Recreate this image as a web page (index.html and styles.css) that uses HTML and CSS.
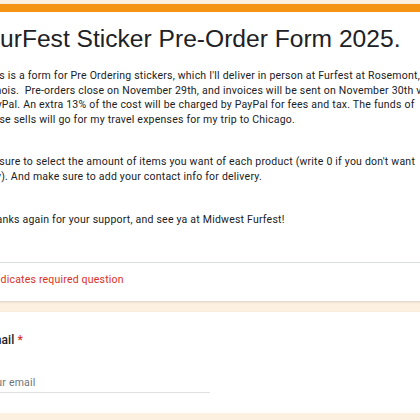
FILE: index.html
```html
<!DOCTYPE html>
<html lang="en">
<head>
<meta charset="utf-8">
<title>FurFest Sticker Pre-Order Form 2025.</title>
<link rel="stylesheet" href="styles.css">
</head>
<body>
<div class="page">
  <div class="card header-card">
    <div class="accent"></div>
    <div class="head-body">
      <h1 class="title">FurFest Sticker Pre-Order Form 2025.</h1>
      <div class="desc">
        <p>This is a form for Pre Ordering stickers, which I'll deliver in person at Furfest at Rosemont,<br>Illinois.&nbsp; Pre-orders close on November 29th, and invoices will be sent on November 30th via<br>PayPal. An extra 13% of the cost will be charged by PayPal for fees and tax. The funds of<br>these sells will go for my travel expenses for my trip to Chicago.</p>
        <p>Be sure to select the amount of items you want of each product (write 0 if you don't want<br>any). And make sure to add your contact info for delivery.</p>
        <p>Thanks again for your support, and see ya at Midwest Furfest!</p>
      </div>
    </div>
    <div class="divider"></div>
    <div class="required">* Indicates required question</div>
  </div>
  <div class="card question">
    <div class="q-title">Email <span class="star">*</span></div>
    <div class="input">Your email</div>
  </div>
</div>
</body>
</html>
```

FILE: styles.css
```css
html, body {
  margin: 0;
  padding: 0;
  overflow: hidden;
  background: #fcf0e1;
  font-family: Roboto, "Liberation Sans", Arial, sans-serif;
  color: #202124;
}

.page {
  margin-left: -16px;
  width: 480px;
  padding-top: 4px;
}

.card {
  background: #ffffff;
  box-shadow: 0 1px 2px rgba(60, 64, 67, 0.18);
}

.accent {
  height: 8px;
  background: #f59412;
}

.head-body {
  padding: 12px 0 35px 0;
}

.title {
  margin: 0 0 0 1px;
  font-family: "Liberation Sans", Arial, sans-serif;
  font-size: 24.6px;
  line-height: 30px;
  font-weight: 400;
  color: #202124;
  white-space: nowrap;
}

.desc {
  margin-top: 15px;
  font-size: 10.5px;
  line-height: 14.6px;
  letter-spacing: 0.22px;
  white-space: nowrap;
}

.desc p {
  margin: 28px 0 0 0;
}

.desc p:first-child {
  margin-top: 0;
}

.divider {
  height: 1px;
  background: #dadce0;
  margin-left: -30px;
}

.required {
  padding: 10px 0 13px 0;
  font-size: 10.5px;
  line-height: 14.6px;
  letter-spacing: 0.2px;
  color: #d93025;
}

.question {
  margin-top: 11px;
  padding: 19px 0 20px 0;
}

.q-title {
  font-size: 12px;
  line-height: 18px;
  font-weight: 500;
  letter-spacing: 0.1px;
  color: #202124;
}

.star {
  color: #d93025;
}

.input {
  margin-top: 26px;
  width: 226px;
  padding-bottom: 2px;
  border-bottom: 1px solid #e0e0e0;
  font-size: 10.5px;
  line-height: 15px;
  letter-spacing: 0.2px;
  color: #70757a;
}
```
